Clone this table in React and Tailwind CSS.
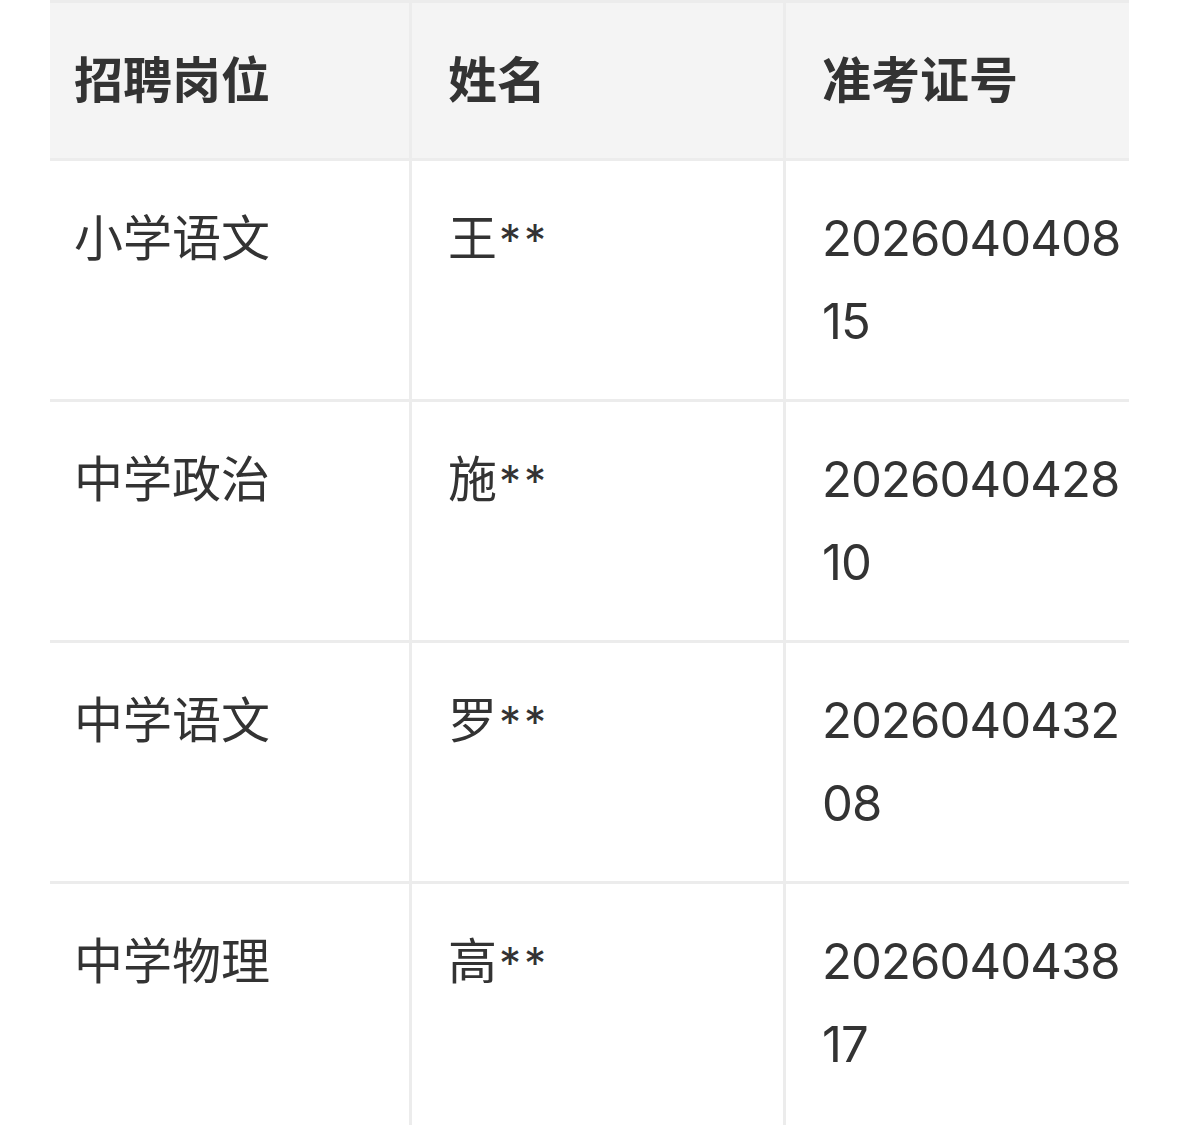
import React from "react";

const rows = [
  { post: "小学语文", name: "王", no: ["2026040408", "15"] },
  { post: "中学政治", name: "施", no: ["2026040428", "10"] },
  { post: "中学语文", name: "罗", no: ["2026040432", "08"] },
  { post: "中学物理", name: "高", no: ["2026040438", "17"] },
];

export default function App() {
  return (
    <div
      className="w-full min-h-[1125px] bg-white pl-[50px] text-[#333333]"
      style={{ fontFamily: 'Inter, "Noto Sans CJK SC", sans-serif' }}
    >
      {/* Table, clipped on the right like a horizontal scroll view */}
      <div className="w-[1079px] overflow-hidden border-t-[3px] border-[#ececec]">
        <div className="w-[1180px] text-[49px] leading-[83px]">
          {/* Header */}
          <div className="grid grid-cols-[362px_374px_1fr] bg-[#f4f4f4] border-b-[3px] border-[#ececec] font-bold">
            <div className="py-[36px] pl-[24px] border-r-[3px] border-[#ececec]">招聘岗位</div>
            <div className="py-[36px] pl-[36px] border-r-[3px] border-[#ececec]">姓名</div>
            <div className="py-[36px] pl-[36px]">准考证号</div>
          </div>

          {rows.map((r, i) => (
            <div
              key={i}
              className={
                i === rows.length - 1
                  ? "grid grid-cols-[362px_374px_1fr] min-h-[245px]"
                  : "grid grid-cols-[362px_374px_1fr] border-b-[3px] border-[#ececec]"
              }
            >
              <div className="py-[36px] pl-[24px] border-r-[3px] border-[#ececec]">{r.post}</div>
              <div className="py-[36px] pl-[36px] border-r-[3px] border-[#ececec]">
                {r.name}
                <span className="text-[44px] tracking-[3px] ml-[2px]">**</span>
              </div>
              <div className="py-[36px] pl-[36px] tracking-[-0.9px]">
                <span className="block">{r.no[0]}</span>
                <span className="block">{r.no[1]}</span>
              </div>
            </div>
          ))}
        </div>
      </div>
    </div>
  );
}
